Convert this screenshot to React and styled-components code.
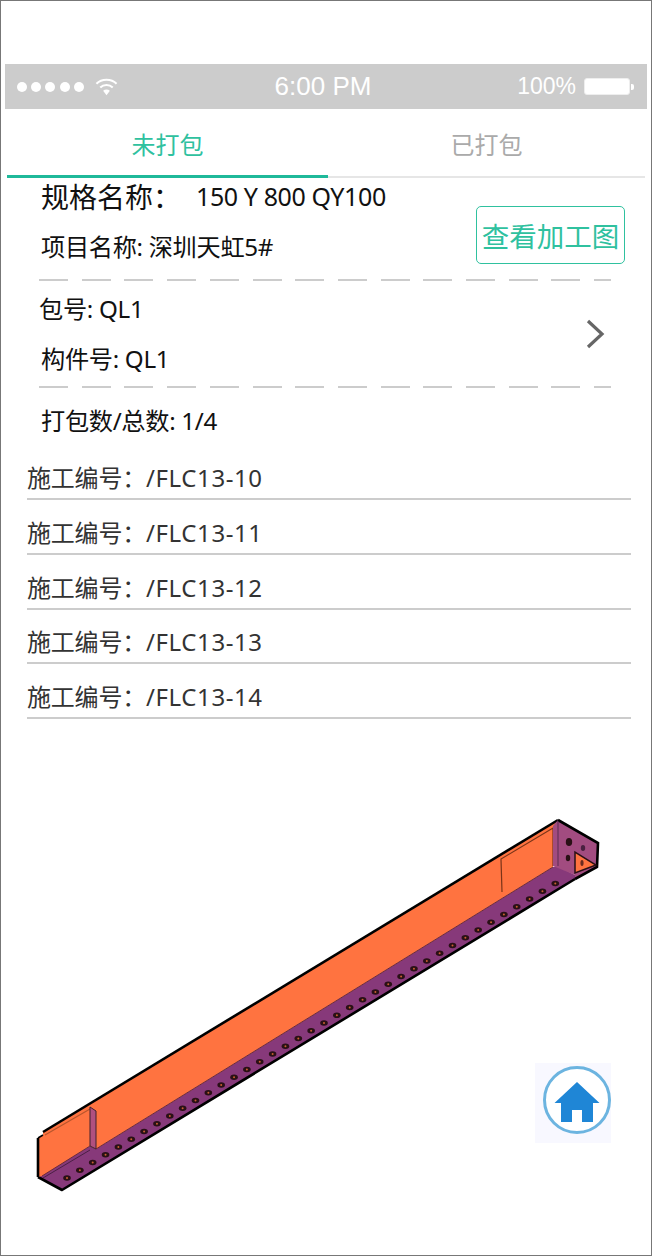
import styled, { createGlobalStyle } from "styled-components"

const Global = createGlobalStyle`
html,body{margin:0;padding:0;background:#fff;}
body{font-family:"Noto Sans","Noto Sans CJK SC",sans-serif;color:#111;}
`
const Frame = styled.div`
position:relative;
width:652px;
height:1256px;
box-sizing:border-box;
border:1px solid #777;
padding-top:63px;
overflow:hidden;
`
const StatusBar = styled.div`
margin:0 4px;
height:45px;
background:#ccc;
color:#fff;
display:grid;
grid-template-columns:1fr auto 1fr;
align-items:center;
padding:0 12px;
font-family:"Liberation Sans",sans-serif;
`
const Signal = styled.div`
display:flex;
align-items:center;
gap:4.2px;
`
const Dot = styled.i`
width:10px;
height:10px;
border-radius:50%;
background:#fff;
`
const Wifi = styled.svg`
margin-left:7px;
`
const Clock = styled.div`
font-size:26px;
margin-right:6px;
`
const Power = styled.div`
display:flex;
align-items:center;
justify-content:flex-end;
gap:8px;
font-size:23px;
`
const Battery = styled.div`
position:relative;
width:44px;
height:15px;
border:1px solid #eee;
border-radius:3px;
background:#fff;
margin-right:5px;
&::after{
content:"";
position:absolute;
right:-5px;
top:5px;
width:3px;
height:6px;
background:#fff;
border-radius:0 2px 2px 0;
}
`
const Tabs = styled.div`
margin:0 6px;
height:67px;
display:flex;
border-bottom:2px solid #e6e6e6;
`
const Tab = styled.div`
flex:${p => p.$active ? '0 0 321px' : 1};
display:flex;
align-items:center;
justify-content:center;
font-size:24px;
padding-top:3px;
margin-bottom:-2px;
color:${p => p.$active ? '#2fc19f' : '#aaa'};
border-bottom:3px solid ${p => p.$active ? '#1fb99a' : 'transparent'};
`
const Head = styled.div`
display:flex;
justify-content:space-between;
align-items:flex-start;
padding:0 26px 0 40px;
height:101px;
`
const Spec = styled.div`
display:flex;
align-items:center;
height:40px;
margin-top:-2px;
font-size:28px;
`
const SpecValue = styled.span`
font-size:25px;
margin-left:15px;
letter-spacing:-0.4px;
`
const InfoLine = styled.div`
font-size:24.2px;
line-height:30px;
white-space:nowrap;
letter-spacing:-0.3px;
padding-left:${p => p.$indent || 0}px;
margin-top:${p => p.$top || 0}px;
`
const DrawingButton = styled.button`
width:149px;
height:58px;
margin-top:28px;
padding:0;
box-sizing:border-box;
border:1.5px solid #2fc19f;
border-radius:5px;
background:#fff;
color:#2fc19f;
font-family:inherit;
font-size:27.5px;
`
const Dash = styled.div`
margin:0 40px 0 38px;
height:2px;
background:repeating-linear-gradient(90deg,#ccc 0,#ccc 29px,transparent 29px,transparent 42.7px);
`
const PackRow = styled.div`
display:flex;
justify-content:space-between;
align-items:center;
height:105px;
padding:0 46px 0 38px;
`
const Count = styled.div`
padding:18px 0 0 40px;
height:39.5px;
`
const List = styled.div`
margin:0 20px 0 26px;
`
const ListRow = styled.div`
height:54.7px;
box-sizing:border-box;
border-bottom:2px solid #ccc;
display:flex;
align-items:flex-end;
padding-bottom:5px;
font-size:24px;
line-height:30px;
color:#333;
white-space:nowrap;
letter-spacing:-0.2px;
`
const Code = styled.span`
letter-spacing:0.6px;
`
const Beam = styled.svg`
display:block;
margin:96px 0 0 29px;
`
const HomeButton = styled.div`
position:absolute;
left:534px;
top:1062px;
width:76px;
height:80px;
box-sizing:border-box;
padding-top:3px;
background:#f8f8ff;
display:flex;
align-items:flex-start;
justify-content:flex-end;
`

const numbers = ['10', '11', '12', '13', '14']
const holes = Array.from({ length: 39 }, (_, i) => [67 + i * 12.85, 1178 - i * 7.75])

const BeamDrawing = () => (
    <Beam width="575" height="380" viewBox="30 815 575 380">
        {/* flange */}
        <polygon points="38,1177 90,1146 96,1149 553,867 558,866 575,875 575,879 62,1190" fill="#87397a" />
        <path d="M38 1177 L62 1190 L575 879" fill="none" stroke="#000" strokeWidth="2.6" strokeLinejoin="round" />
        <line x1="43" y1="1178" x2="90" y2="1150" stroke="#4b1f45" strokeWidth="1" />
        {holes.map(([x, y]) => (
            <g key={x}>
                <ellipse cx={x} cy={y} rx="3.8" ry="2.8" fill="#2a1016" />
                <circle cx={x} cy={y} r="1" fill="#c8602f" />
            </g>
        ))}
        {/* web */}
        <polygon points="38,1138 43,1135 43,1132 558,820 553,828 553,867 96,1149 90,1146 42,1176 38,1177" fill="#ff7340" />
        <line x1="43" y1="1132" x2="558" y2="820" stroke="#000" strokeWidth="2.6" />
        <line x1="38" y1="1138" x2="38" y2="1177" stroke="#000" strokeWidth="2.6" />
        <line x1="38" y1="1138" x2="43" y2="1135" stroke="#000" strokeWidth="1.5" />
        <path d="M42 1176 L90 1146 M96 1149 L553 867" fill="none" stroke="#6b2a3a" strokeWidth="1" />
        <line x1="45" y1="1135" x2="90" y2="1109" stroke="#b8552c" strokeWidth="1.2" />
        <polygon points="90,1107 96,1111 96,1149 90,1146" fill="#b0507f" stroke="#40202c" strokeWidth="1" />
        <path d="M502 892 L501 859 L553 828 V866" fill="none" stroke="#7a3418" strokeWidth="1.2" />
        {/* end plate */}
        <polygon points="553,826 558,820 598,843 597,867 575,879 575,875 553,866" fill="#a24c80" />
        <path d="M558 820 L598 843 L597 867 L575 879" fill="none" stroke="#000" strokeWidth="2.6" />
        <line x1="558" y1="821" x2="558" y2="866" stroke="#5a2a50" strokeWidth="1" />
        <polygon points="575,852 575,873 596,865" fill="#ff7340" stroke="#2a1016" strokeWidth="1.5" />
        <ellipse cx="569" cy="842" rx="3.2" ry="4" fill="#2a1016" />
        <ellipse cx="583" cy="848" rx="2.2" ry="3" fill="#4a2040" />
        <ellipse cx="568" cy="858" rx="2.2" ry="3.2" fill="#2a1016" />
        <ellipse cx="582" cy="863" rx="1.6" ry="3" fill="#6a2a20" />
    </Beam>
)

const App = () => {
    return <Frame>
        <Global />
        <StatusBar>
            <Signal>
                {[0, 1, 2, 3, 4].map(i => <Dot key={i} />)}
                <Wifi width="23" height="20" viewBox="0 0 24 20">
                    <g fill="none" stroke="#fff" strokeWidth="2.2">
                        <path d="M1.5 6.5 C7 1 17 1 22.5 6.5" />
                        <path d="M5.5 10.5 C9 7 15 7 18.5 10.5" />
                    </g>
                    <path d="M8.5 14 C10.5 12.2 13.5 12.2 15.5 14 L12 18.5 Z" fill="#fff" />
                </Wifi>
            </Signal>
            <Clock>6:00 PM</Clock>
            <Power>100%<Battery /></Power>
        </StatusBar>
        <Tabs>
            <Tab $active>未打包</Tab>
            <Tab>已打包</Tab>
        </Tabs>
        <Head>
            <div>
                <Spec>规格名称：<SpecValue>150 Y 800 QY100</SpecValue></Spec>
                <InfoLine $top={16}>项目名称: 深圳天虹5#</InfoLine>
            </div>
            <DrawingButton>查看加工图</DrawingButton>
        </Head>
        <Dash />
        <PackRow>
            <div>
                <InfoLine>包号: QL1</InfoLine>
                <InfoLine $top={20} $indent={2}>构件号: QL1</InfoLine>
            </div>
            <svg width="20" height="32" viewBox="0 0 20 32">
                <path d="M3 3 L17 16 L3 29" fill="none" stroke="#666" strokeWidth="3.2" />
            </svg>
        </PackRow>
        <Dash />
        <Count><InfoLine>打包数/总数: 1/4</InfoLine></Count>
        <List>
            {numbers.map(n => <ListRow key={n}>施工编号：<Code>/FLC13-{n}</Code></ListRow>)}
        </List>
        <BeamDrawing />
        <HomeButton>
            <svg width="68" height="68" viewBox="0 0 68 68">
                <circle cx="34" cy="34" r="32.5" fill="#fff" stroke="#6cb4e0" strokeWidth="3" />
                <path d="M34 16 L56.5 37 H50 V56 H39 V44 H29 V56 H18 V37 H11.5 Z" fill="#1f86d6" />
            </svg>
        </HomeButton>
    </Frame>
}

export default App
